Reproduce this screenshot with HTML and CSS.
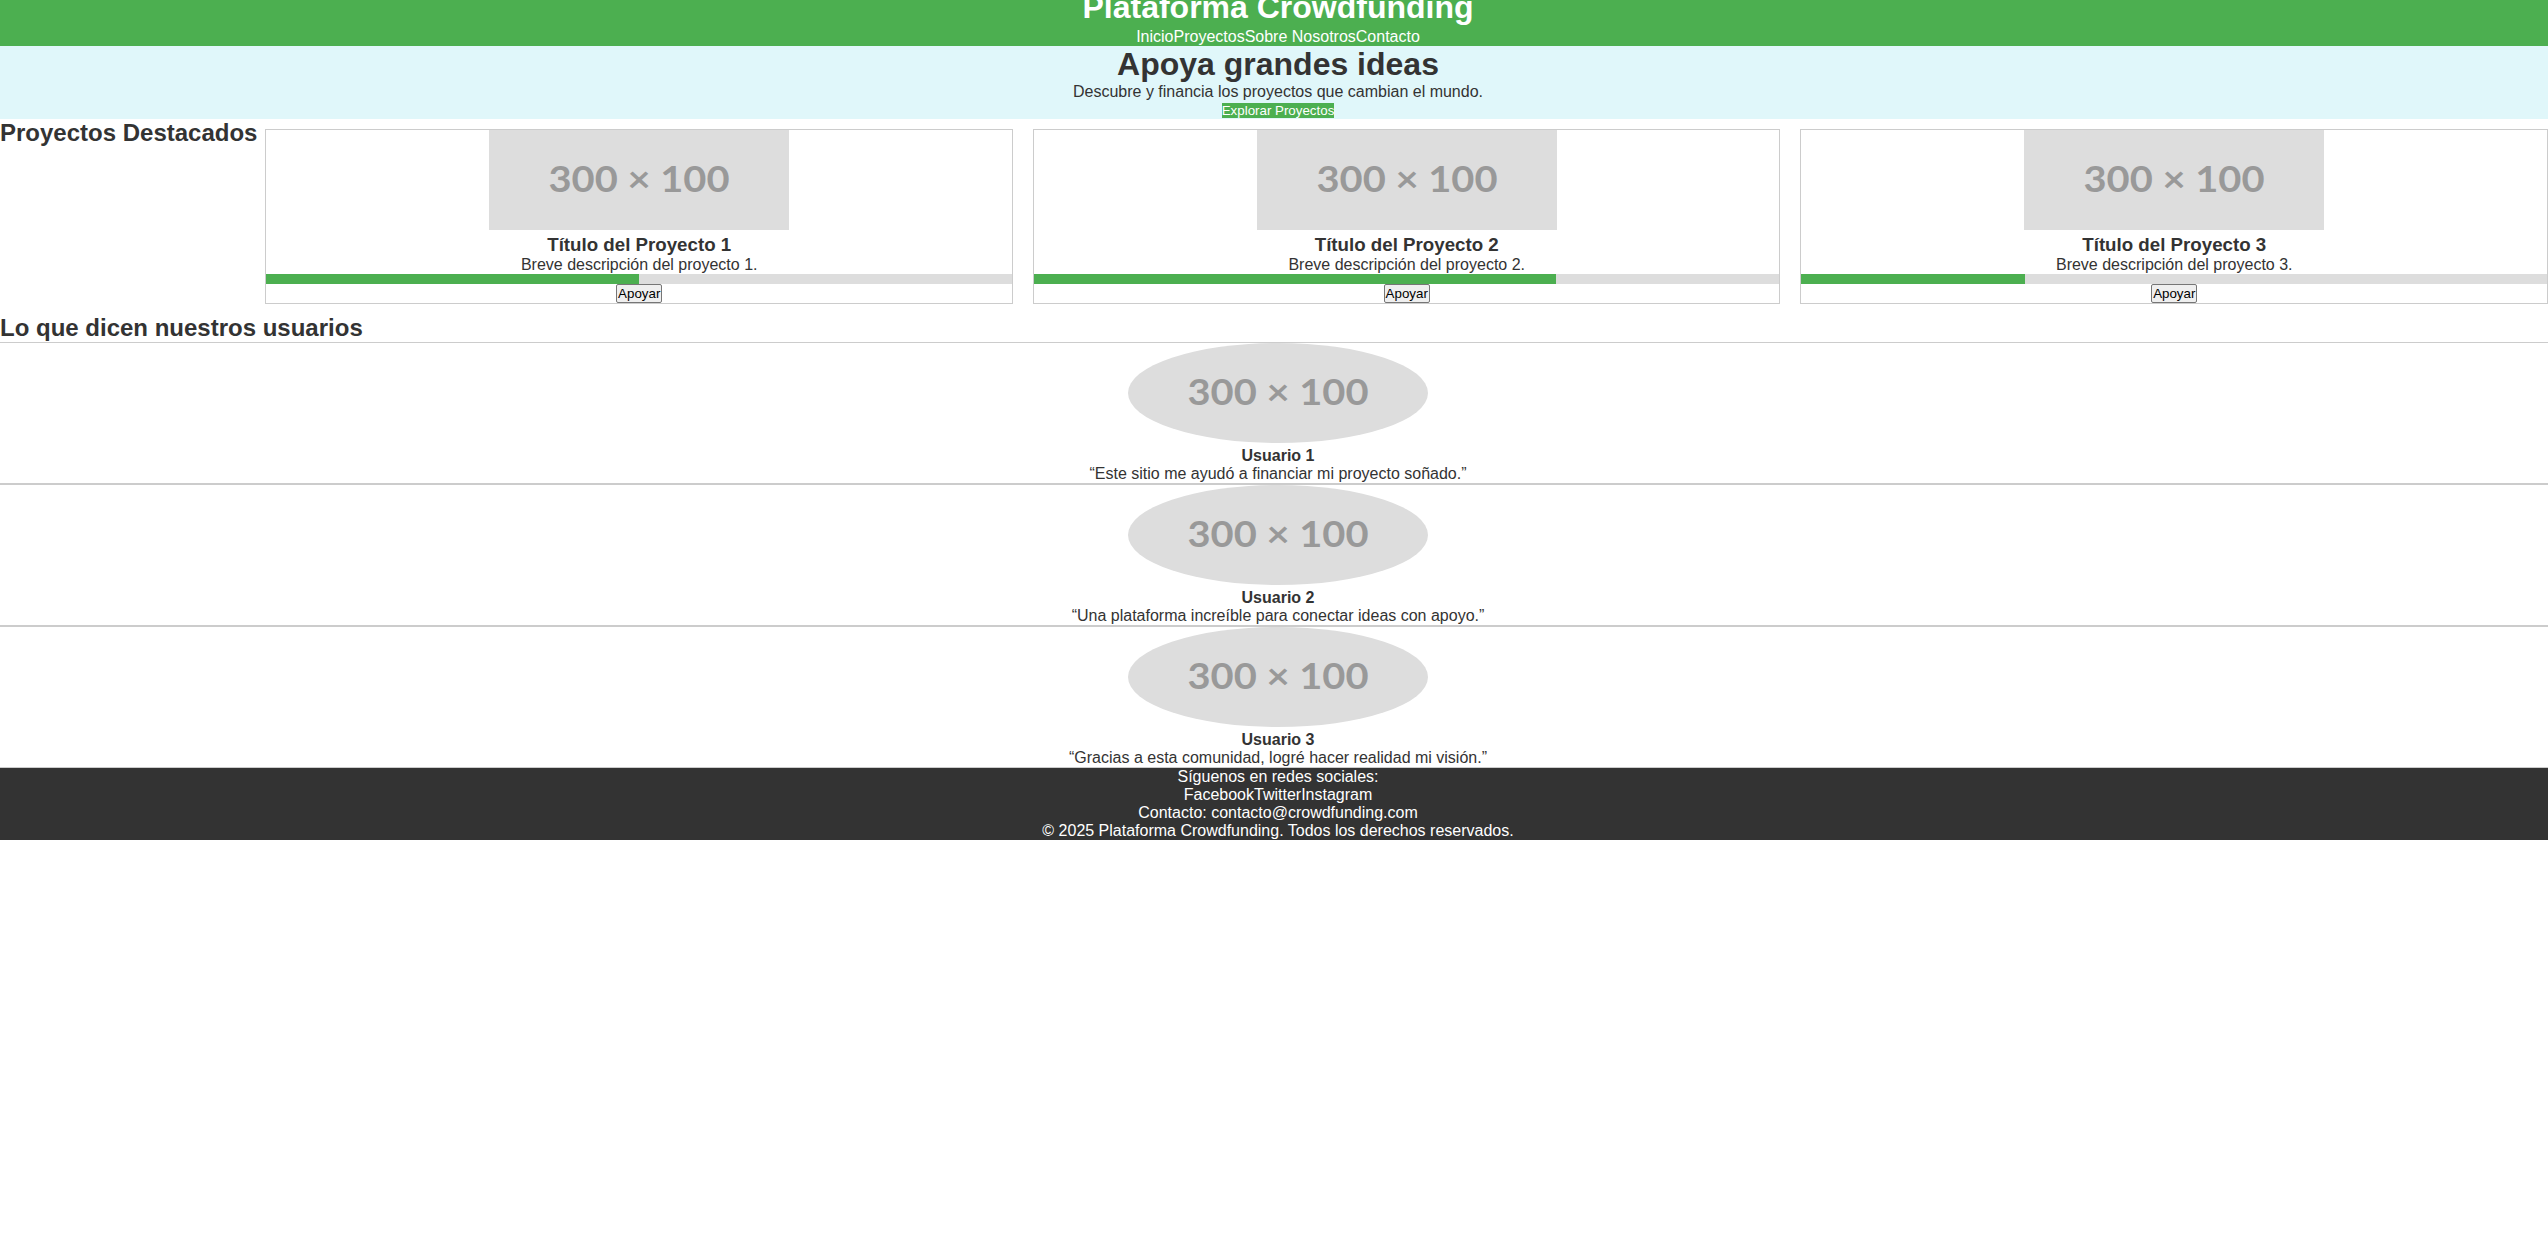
FILE: index.html
```html
<!DOCTYPE html>
<html lang="es">
<head>
<meta charset="utf-8">
<title>Plataforma Crowdfunding</title>
<link rel="stylesheet" href="styles.css">
</head>
<body>
<header class="site-header">
  <h1 class="site-title">Plataforma Crowdfunding</h1>
  <nav class="main-nav"><a href="#">Inicio</a><a href="#">Proyectos</a><a href="#">Sobre Nosotros</a><a href="#">Contacto</a></nav>
</header>

<section class="hero">
  <h2 class="hero-title">Apoya grandes ideas</h2>
  <p class="hero-text">Descubre y financia los proyectos que cambian el mundo.</p>
  <div class="hero-action"><button class="btn-explore">Explorar Proyectos</button></div>
</section>

<section class="featured">
  <h2 class="section-title">Proyectos Destacados</h2>
  <div class="project-list">
    <article class="project-card">
      <div class="project-media"><svg class="ph" width="300" height="100" viewBox="0 0 300 100"><rect width="300" height="100" fill="#dddddd"/><text x="150" y="62" text-anchor="middle" textLength="181" lengthAdjust="spacingAndGlyphs" class="ph-text">300 × 100</text></svg></div>
      <h3 class="project-title">Título del Proyecto 1</h3>
      <p class="project-desc">Breve descripción del proyecto 1.</p>
      <div class="progress"><div class="progress-fill" style="width:50%"></div></div>
      <div class="project-action"><button class="btn-support">Apoyar</button></div>
    </article>
    <article class="project-card">
      <div class="project-media"><svg class="ph" width="300" height="100" viewBox="0 0 300 100"><rect width="300" height="100" fill="#dddddd"/><text x="150" y="62" text-anchor="middle" textLength="181" lengthAdjust="spacingAndGlyphs" class="ph-text">300 × 100</text></svg></div>
      <h3 class="project-title">Título del Proyecto 2</h3>
      <p class="project-desc">Breve descripción del proyecto 2.</p>
      <div class="progress"><div class="progress-fill" style="width:70%"></div></div>
      <div class="project-action"><button class="btn-support">Apoyar</button></div>
    </article>
    <article class="project-card">
      <div class="project-media"><svg class="ph" width="300" height="100" viewBox="0 0 300 100"><rect width="300" height="100" fill="#dddddd"/><text x="150" y="62" text-anchor="middle" textLength="181" lengthAdjust="spacingAndGlyphs" class="ph-text">300 × 100</text></svg></div>
      <h3 class="project-title">Título del Proyecto 3</h3>
      <p class="project-desc">Breve descripción del proyecto 3.</p>
      <div class="progress"><div class="progress-fill" style="width:30%"></div></div>
      <div class="project-action"><button class="btn-support">Apoyar</button></div>
    </article>
  </div>
</section>

<section class="testimonials">
  <h2 class="section-title">Lo que dicen nuestros usuarios</h2>
  <div class="testimonial">
    <svg class="ph" width="300" height="100" viewBox="0 0 300 100"><ellipse cx="150" cy="50" rx="150" ry="50" fill="#dddddd"/><text x="150" y="62" text-anchor="middle" textLength="181" lengthAdjust="spacingAndGlyphs" class="ph-text">300 × 100</text></svg>
    <h4 class="testimonial-name">Usuario 1</h4>
    <p class="testimonial-quote">“Este sitio me ayudó a financiar mi proyecto soñado.”</p>
  </div>
  <div class="testimonial">
    <svg class="ph" width="300" height="100" viewBox="0 0 300 100"><ellipse cx="150" cy="50" rx="150" ry="50" fill="#dddddd"/><text x="150" y="62" text-anchor="middle" textLength="181" lengthAdjust="spacingAndGlyphs" class="ph-text">300 × 100</text></svg>
    <h4 class="testimonial-name">Usuario 2</h4>
    <p class="testimonial-quote">“Una plataforma increíble para conectar ideas con apoyo.”</p>
  </div>
  <div class="testimonial">
    <svg class="ph" width="300" height="100" viewBox="0 0 300 100"><ellipse cx="150" cy="50" rx="150" ry="50" fill="#dddddd"/><text x="150" y="62" text-anchor="middle" textLength="181" lengthAdjust="spacingAndGlyphs" class="ph-text">300 × 100</text></svg>
    <h4 class="testimonial-name">Usuario 3</h4>
    <p class="testimonial-quote">“Gracias a esta comunidad, logré hacer realidad mi visión.”</p>
  </div>
</section>

<footer class="site-footer">
  <p class="footer-line">Síguenos en redes sociales:</p>
  <p class="footer-line"><a href="#">Facebook</a><a href="#">Twitter</a><a href="#">Instagram</a></p>
  <p class="footer-line">Contacto: contacto@crowdfunding.com</p>
  <p class="footer-line">© 2025 Plataforma Crowdfunding. Todos los derechos reservados.</p>
</footer>
</body>
</html>
```

FILE: styles.css
```css
html, body {
  margin: 0;
  padding: 0;
  background: #ffffff;
}

body {
  font-family: "Liberation Sans", Arial, sans-serif;
  font-size: 16px;
  color: #333333;
}

.site-header {
  background: #4caf50;
  color: #ffffff;
  text-align: center;
  padding-left: 8px;
}

.site-title {
  margin: -11px 0 0;
  font-size: 32px;
  font-weight: bold;
}

.main-nav {
  padding-top: 2px;
}

.main-nav a {
  color: #ffffff;
  text-decoration: none;
}

.hero {
  background: #e0f7fa;
  text-align: center;
  padding-left: 8px;
}

.hero-title {
  margin: 0;
  font-size: 32px;
  font-weight: bold;
}

.hero-text {
  margin: 0;
}

.btn-explore {
  font-family: "Liberation Sans", Arial, sans-serif;
  font-size: 13.333px;
  background: #4caf50;
  color: #ffffff;
  border: none;
  padding: 0;
  margin: 0;
}

.featured {
  display: flex;
  align-items: flex-start;
}

.section-title {
  margin: 0;
  font-size: 24px;
  font-weight: bold;
  flex: none;
}

.project-list {
  flex: 1;
  display: flex;
  gap: 20px;
  padding: 10px 0;
  margin-left: 8px;
}

.project-card {
  flex: 1 1 0;
  min-width: 0;
  border: 1px solid #cccccc;
  text-align: center;
}

.ph {
  display: inline;
  vertical-align: baseline;
}

.ph-text {
  font-family: Lato, "Liberation Sans", sans-serif;
  font-size: 36px;
  font-weight: bold;
  fill: #999999;
}

.project-title {
  margin: 0;
  font-size: 18.72px;
  font-weight: bold;
}

.project-desc {
  margin: 0;
}

.progress {
  height: 10px;
  background: #dddddd;
}

.progress-fill {
  height: 100%;
  background: #4caf50;
}

.project-action {
  display: flex;
  justify-content: center;
}

.btn-support {
  font-family: "Liberation Sans", Arial, sans-serif;
  font-size: 13.333px;
  color: #000000;
  background: #efefef;
  border: 1px solid #767676;
  border-radius: 2px;
  padding: 1px;
  margin: 0;
}

.testimonial {
  border-style: solid;
  border-color: #cccccc;
  border-width: 1px 0;
  text-align: center;
  padding-left: 8px;
}

.testimonial-name {
  margin: 0;
  font-size: 16px;
  font-weight: bold;
}

.testimonial-quote {
  margin: 0;
}

.site-footer {
  background: #333333;
  color: #ffffff;
  text-align: center;
  padding-left: 8px;
}

.footer-line {
  margin: 0;
}

.footer-line a {
  color: #ffffff;
  text-decoration: none;
}
```
